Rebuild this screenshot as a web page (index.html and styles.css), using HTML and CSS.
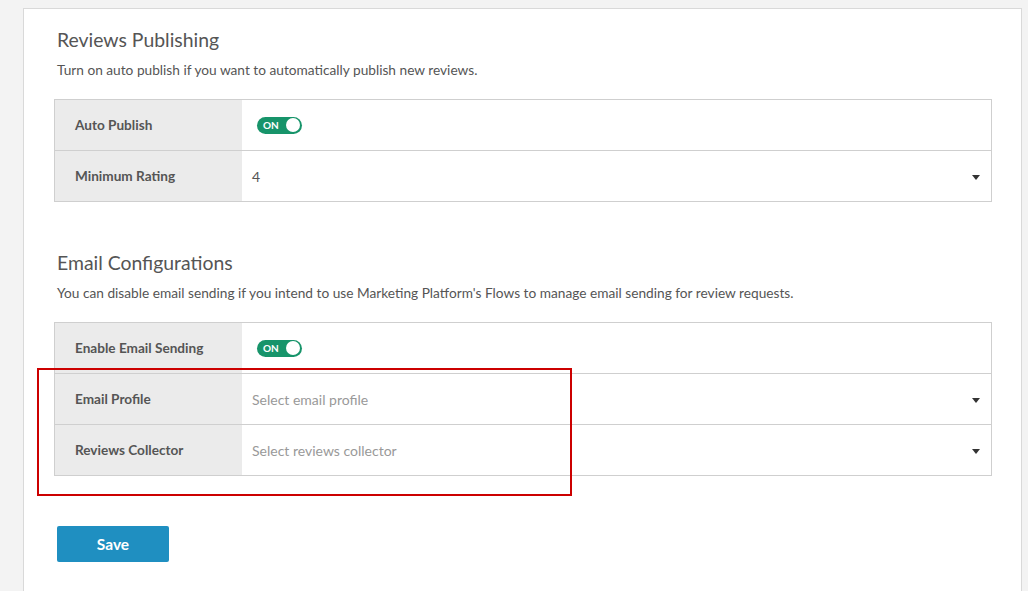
FILE: index.html
```html
<!DOCTYPE html>
<html>
<head>
<meta charset="utf-8">
<link rel="stylesheet" href="styles.css">
</head>
<body>
<div class="card">
  <section class="section">
    <h2 class="title">Reviews Publishing</h2>
    <p class="desc">Turn on auto publish if you want to automatically publish new reviews.</p>
    <div class="table">
      <div class="row">
        <div class="label">Auto Publish</div>
        <div class="value"><span class="toggle"><span class="toggle-text">ON</span><span class="knob"></span></span></div>
      </div>
      <div class="row">
        <div class="label">Minimum Rating</div>
        <div class="value select"><span class="val">4</span><span class="caret"></span></div>
      </div>
    </div>
  </section>
  <section class="section second">
    <h2 class="title">Email Configurations</h2>
    <p class="desc">You can disable email sending if you intend to use Marketing Platform's Flows to manage email sending for review requests.</p>
    <div class="table">
      <div class="row">
        <div class="label">Enable Email Sending</div>
        <div class="value"><span class="toggle"><span class="toggle-text">ON</span><span class="knob"></span></span></div>
      </div>
      <div class="row">
        <div class="label">Email Profile</div>
        <div class="value select"><span class="placeholder">Select email profile</span><span class="caret"></span></div>
      </div>
      <div class="row">
        <div class="label">Reviews Collector</div>
        <div class="value select"><span class="placeholder">Select reviews collector</span><span class="caret"></span></div>
      </div>
    </div>
    <div class="highlight"></div>
  </section>
  <button class="save">Save</button>
</div>
</body>
</html>
```
FILE: styles.css
```css
html, body {
  margin: 0;
  padding: 0;
}
body {
  background: #f3f3f3;
  font-family: Lato, "Open Sans", sans-serif;
  color: #555;
  height: 591px;
  overflow: hidden;
}
.card {
  margin: 8px 6px 0 23px;
  background: #fff;
  border: 1px solid #d9d9d9;
  border-bottom: none;
  padding: 19px 29px 40px 30px;
  height: 600px;
  box-sizing: border-box;
}
.section {
  position: relative;
}
.second {
  margin-top: 49px;
}
.title {
  margin: 0 0 0 3px;
  font-size: 19.4px;
  font-weight: 400;
  line-height: 24px;
  color: #555;
}
.desc {
  margin: 9px 0 0 3px;
  font-size: 13.7px;
  line-height: 18px;
  color: #555;
}
.table {
  margin-top: 20px;
  border: 1px solid #cfcfcf;
}
.row {
  display: flex;
  height: 50px;
  border-top: 1px solid #cfcfcf;
}
.row:first-child {
  border-top: none;
}
.label {
  width: 187px;
  background: #ebebeb;
  display: flex;
  align-items: center;
  padding-left: 20px;
  box-sizing: border-box;
  font-size: 13.6px;
  font-weight: 700;
  color: #555;
}
.value {
  flex: 1;
  display: flex;
  align-items: center;
  padding: 0 11px 0 10px;
  font-size: 14px;
}
.val {
  flex: 1;
  color: #555;
}
.placeholder {
  flex: 1;
  color: #999;
}
.caret {
  width: 0;
  height: 0;
  border-left: 4px solid transparent;
  border-right: 4px solid transparent;
  border-top: 5px solid #333;
  margin-top: 2px;
}
.toggle {
  margin-left: 5px;
  width: 45px;
  height: 17px;
  border-radius: 9px;
  background: #17946a;
  display: flex;
  align-items: center;
  justify-content: space-between;
  padding: 0 2px 0 6px;
  box-sizing: border-box;
}
.toggle-text {
  color: #fff;
  font-size: 10px;
  font-weight: 700;
  line-height: 10px;
}
.knob {
  width: 14px;
  height: 14px;
  border-radius: 50%;
  background: #fff;
}
.highlight {
  position: absolute;
  left: -17px;
  top: 117px;
  width: 531px;
  height: 124px;
  border: 2px solid #cc0000;
}
.save {
  margin-top: 50px;
  margin-left: 3px;
  width: 112px;
  height: 36px;
  border: none;
  border-radius: 2px;
  background: #1f8fc1;
  color: #fff;
  font-family: Lato, "Open Sans", sans-serif;
  font-size: 15.5px;
  font-weight: 700;
}
```
